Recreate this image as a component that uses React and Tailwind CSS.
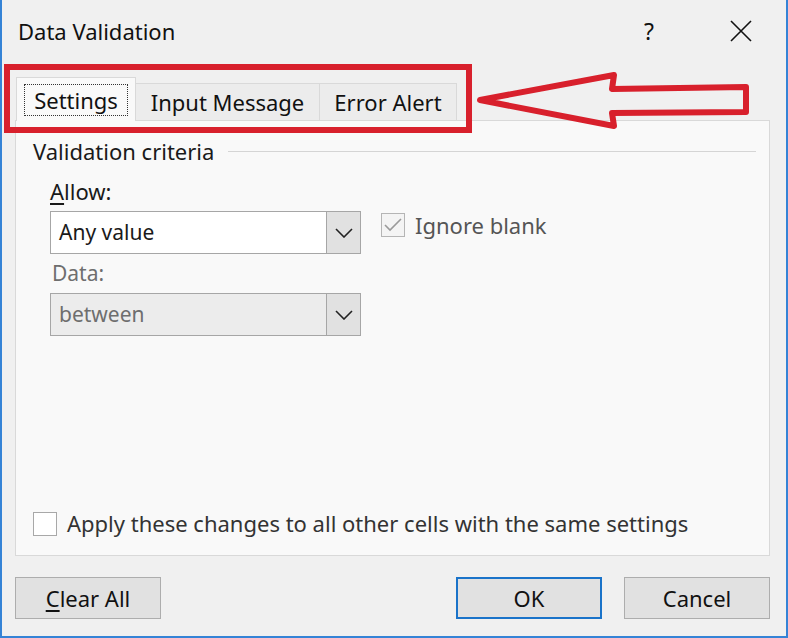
import React from 'react';

const font = { fontFamily: '"Noto Sans", "Open Sans", sans-serif' };

const Chevron = () => (
  <svg width="18" height="10" viewBox="0 0 18 10" fill="none">
    <path d="M1 1l8 8 8-8" stroke="#222" strokeWidth="1.6" />
  </svg>
);

const Select = ({ value, disabled }) => (
  <div
    className={`flex h-[43px] w-[311px] border border-[#a6a6a6] ${
      disabled ? 'bg-[#ececec] text-[#6e6e6e]' : 'bg-white text-[#1a1a1a]'
    }`}
  >
    <div className="flex flex-1 items-center pl-[8px] text-[21px]">{value}</div>
    <div className="flex w-[34px] items-center justify-center border-l border-[#a6a6a6] bg-[#e1e1e1]">
      <Chevron />
    </div>
  </div>
);

const Button = ({ children, primary }) => (
  <button
    className={`flex h-[42px] w-[146px] items-center justify-center bg-[#e1e1e1] text-[22px] text-[#111] ${
      primary ? 'border-2 border-[#1a73c9]' : 'border border-[#adadad]'
    }`}
  >
    {children}
  </button>
);

export default function App() {
  return (
    <div
      className="relative flex h-[638px] w-[788px] flex-col border-x-2 border-b-2 border-[#3583d6] bg-[#f0f0f0]"
      style={font}
    >
      {/* title bar */}
      <div className="flex h-[62px] items-center pl-[16px] pr-[34px] text-[#111]">
        <span className="text-[22px]">Data Validation</span>
        <span className="ml-auto mr-[76px] text-[23px]">?</span>
        <svg width="22" height="22" viewBox="0 0 22 22">
          <path d="M1 1l20 20M21 1L1 21" stroke="#111" strokeWidth="1.6" />
        </svg>
      </div>

      {/* tabs */}
      <div className="mt-[15px] flex h-[43px] items-end pl-[14px] text-[22px] text-[#111]">
        <div className="z-10 -mb-px flex h-[44px] w-[120px] items-center justify-center border border-b-0 border-[#d9d9d9] bg-[#f9f9f9]">
          <span className="border border-dotted border-[#333] px-[9px] leading-[30px]">Settings</span>
        </div>
        <div className="flex h-[37px] w-[184px] items-center justify-center border border-b-0 border-l-0 border-[#d9d9d9] bg-[#ececec]">
          Input Message
        </div>
        <div className="flex h-[37px] w-[137px] items-center justify-center border border-b-0 border-l-0 border-[#d9d9d9] bg-[#ececec]">
          Error Alert
        </div>
      </div>

      {/* tab panel */}
      <div className="ml-[13px] mr-[16px] flex h-[436px] flex-col border border-[#d9d9d9] bg-[#f9f9f9]">
        <div className="mt-[14px] flex items-center pl-[17px] pr-[13px]">
          <span className="text-[22px] text-[#1a1a1a]">Validation criteria</span>
          <div className="ml-[14px] h-px flex-1 bg-[#d5d5d5]" />
        </div>

        <div className="flex pl-[34px]">
          <div className="flex flex-col">
            <span className="mt-[8px] text-[22px] leading-[30px] text-[#1a1a1a]">
              <span className="underline underline-offset-[3px]">A</span>llow:
            </span>
            <div className="mt-[5px]">
              <Select value="Any value" />
            </div>
            <span className="mt-[4px] pl-[2px] text-[21px] leading-[30px] text-[#6e6e6e]">Data:</span>
            <div className="mt-[5px]">
              <Select value="between" disabled />
            </div>
          </div>
          <div className="ml-[20px] mt-[45px] flex h-[24px] items-center">
            <div className="flex h-[24px] w-[24px] items-center justify-center border border-[#b5b5b5] bg-[#f4f4f4]">
              <svg width="18" height="14" viewBox="0 0 18 14" fill="none">
                <path d="M1 7l5 5L17 1" stroke="#9a9a9a" strokeWidth="1.6" />
              </svg>
            </div>
            <span className="ml-[10px] text-[22px] text-[#555]">Ignore blank</span>
          </div>
        </div>

        <div className="mb-[15px] mt-auto flex items-center pl-[17px]">
          <div className="h-[24px] w-[24px] border border-[#a8a8a8] bg-white" />
          <span className="ml-[10px] text-[22px] text-[#333]">
            Apply these changes to all other cells with the same settings
          </span>
        </div>
      </div>

      {/* buttons */}
      <div className="mt-[21px] flex pl-[13px] pr-[16px]">
        <Button>
          <span>
            <span className="underline underline-offset-[3px]">C</span>lear All
          </span>
        </Button>
        <div className="ml-auto flex gap-[22px]">
          <Button primary>OK</Button>
          <Button>Cancel</Button>
        </div>
      </div>

      {/* red annotation */}
      <div className="pointer-events-none absolute left-[2px] top-[64px] h-[69px] w-[468px] border-[6px] border-[#d8202c]" />
      <svg
        className="pointer-events-none absolute left-[470px] top-[66px]"
        width="290"
        height="70"
        viewBox="0 0 290 70"
        fill="none"
      >
        <path
          d="M8 34 L142 9 L140 23 L274 21 L274 46 L140 47 L142 60 Z"
          stroke="#d8202c"
          strokeWidth="6"
          strokeLinejoin="round"
        />
      </svg>
    </div>
  );
}
